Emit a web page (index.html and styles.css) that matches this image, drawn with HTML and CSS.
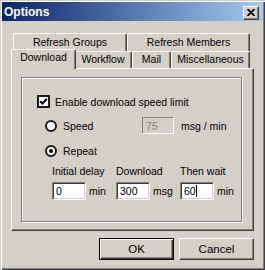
FILE: index.html
```html
<!DOCTYPE html>
<html lang="en">
<head>
    <meta charset="UTF-8">
    <title>Options</title>
    <link rel="stylesheet" href="styles.css">
</head>
<body>
    <div class="window">
        <div class="titlebar">
            <span class="title">Options</span>
            <div class="close-btn">
                <svg width="8" height="7" viewBox="0 0 8 7"><path d="M0.5 0 L7.5 7 M7.5 0 L0.5 7" stroke="#000" stroke-width="1.7" fill="none"/></svg>
            </div>
        </div>
        <div class="tabs">
            <div class="tab-row back">
                <div class="tab tab-groups">Refresh Groups</div>
                <div class="tab tab-members">Refresh Members</div>
            </div>
            <div class="tab-row front">
                <div class="tab tab-download active">Download</div>
                <div class="tab tab-workflow">Workflow</div>
                <div class="tab tab-mail">Mail</div>
                <div class="tab tab-misc">Miscellaneous</div>
            </div>
        </div>
        <div class="panel">
            <div class="group">
                <div class="row check-row">
                    <span class="checkbox">
                        <svg width="9" height="9" viewBox="0 0 9 9"><path d="M1.2 4.2 L3.5 6.5 L7.8 2" stroke="#000" stroke-width="2" fill="none"/></svg>
                    </span>
                    <span>Enable download speed limit</span>
                </div>
                <div class="row speed-row">
                    <span class="radio"></span>
                    <span class="radio-label">Speed</span>
                    <div class="field disabled">75</div>
                    <span class="unit-wide">msg / min</span>
                </div>
                <div class="row repeat-row">
                    <span class="radio checked"></span>
                    <span class="radio-label">Repeat</span>
                </div>
                <div class="fields">
                    <span class="field-label">Initial delay</span>
                    <span class="field-label">Download</span>
                    <span class="field-label">Then wait</span>
                    <div class="field-cell"><div class="field">0</div><span class="unit">min</span></div>
                    <div class="field-cell"><div class="field">300</div><span class="unit">msg</span></div>
                    <div class="field-cell"><div class="field">60<span class="caret"></span></div><span class="unit">min</span></div>
                </div>
            </div>
        </div>
        <div class="buttons">
            <div class="btn default">OK</div>
            <div class="btn">Cancel</div>
        </div>
    </div>
</body>
</html>
```
FILE: styles.css
```css
body {
    margin: 0;
    padding: 0;
    font-family: 'Liberation Sans', Arial, sans-serif;
    font-size: 10.5px;
    color: #000;
    background-color: #d4d0c8;
}
.window {
    width: 265px;
    height: 270px;
    box-sizing: border-box;
    padding: 2px;
    background-color: #d4d0c8;
    box-shadow: inset 1px 1px #d4d0c8, inset 2px 2px #fff, inset -1px -1px #404040, inset -2px -2px #808080;
    overflow: hidden;
}
.titlebar {
    height: 19px;
    display: flex;
    align-items: center;
    justify-content: space-between;
    background: linear-gradient(to right, #0a246a, #a6caf0);
}
.title {
    color: #fff;
    font-weight: bold;
    font-size: 12px;
    padding-left: 2px;
}
.close-btn {
    width: 16px;
    height: 14px;
    box-sizing: border-box;
    margin-right: 4px;
    margin-top: 2px;
    background-color: #d4d0c8;
    border-top: 1px solid #fff;
    border-left: 1px solid #fff;
    border-right: 1px solid #404040;
    border-bottom: 1px solid #404040;
    box-shadow: inset -1px -1px #808080;
    display: flex;
    align-items: center;
    justify-content: center;
}
.tabs {
    margin-top: 12px;
    margin-left: 11px;
    width: 237px;
}
.tab-row {
    display: flex;
    align-items: flex-start;
}
.tab {
    box-sizing: border-box;
    text-align: center;
    background-color: #d4d0c8;
    border-top: 1px solid #fff;
    border-left: 1px solid #fff;
    border-right: 1px solid #404040;
    border-top-left-radius: 2px;
    border-top-right-radius: 2px;
    box-shadow: inset -1px 0 #808080;
    white-space: nowrap;
}
.back .tab {
    height: 18px;
    line-height: 16px;
}
.front .tab {
    height: 17px;
    line-height: 15px;
}
.tab-groups { width: 114px; }
.tab-members { width: 123px; }
.tab-download { width: 61px; }
.tab-workflow { width: 58px; }
.tab-mail { width: 39px; }
.tab-misc { width: 79px; }
.front .tab.active {
    position: relative;
    z-index: 1;
    width: 65px;
    height: 20px;
    margin: -2px -2px -1px -2px;
    line-height: 15px;
}
.panel {
    margin-left: 9px;
    width: 243px;
    height: 163px;
    box-sizing: border-box;
    border-top: 1px solid #fff;
    border-left: 1px solid #fff;
    border-right: 1px solid #404040;
    border-bottom: 1px solid #404040;
    box-shadow: inset -1px -1px #808080;
    padding-top: 8px;
    padding-left: 9px;
}
.group {
    width: 221px;
    height: 145px;
    box-sizing: border-box;
    border: 1px solid #808080;
    box-shadow: inset 1px 1px #fff, 1px 1px #fff;
    padding-top: 17px;
}
.row {
    display: flex;
    align-items: center;
}
.check-row {
    height: 13px;
    padding-left: 15px;
    gap: 5px;
}
.checkbox {
    width: 13px;
    height: 13px;
    box-sizing: border-box;
    border: 2px solid #1a1a1a;
    background-color: #fff;
    display: flex;
    align-items: center;
    justify-content: center;
}
.speed-row {
    height: 17px;
    margin-top: 9px;
    padding-left: 23px;
}
.repeat-row {
    height: 17px;
    margin-top: 8px;
    padding-left: 23px;
}
.radio {
    width: 12px;
    height: 12px;
    box-sizing: border-box;
    border: 2px solid #1a1a1a;
    border-radius: 50%;
    background-color: #fff;
    display: flex;
    align-items: center;
    justify-content: center;
}
.radio.checked::after {
    content: "";
    width: 4px;
    height: 4px;
    border-radius: 50%;
    background-color: #000;
}
.radio-label {
    margin-left: 6px;
}
.speed-row .radio-label {
    width: 79px;
}
.field {
    width: 34px;
    height: 18px;
    box-sizing: border-box;
    border-top: 1px solid #808080;
    border-left: 1px solid #808080;
    border-right: 1px solid #fff;
    border-bottom: 1px solid #fff;
    box-shadow: inset 1px 1px #404040, inset -1px -1px #d4d0c8;
    background-color: #fff;
    padding-left: 3px;
    line-height: 16px;
    display: flex;
    align-items: center;
}
.field.disabled {
    width: 32px;
    height: 17px;
    background-color: #d4d0c8;
    color: #808080;
    box-shadow: none;
}
.caret {
    display: inline-block;
    width: 1px;
    height: 12px;
    background-color: #000;
}
.unit-wide {
    margin-left: 7px;
}
.fields {
    display: grid;
    grid-template-columns: repeat(3, 64px);
    margin-left: 30px;
    margin-top: 6px;
    row-gap: 4px;
}
.field-label {
    line-height: 13px;
    white-space: nowrap;
}
.field-cell {
    display: flex;
    align-items: center;
    gap: 3px;
}
.buttons {
    margin-left: 9px;
    margin-top: 7px;
    width: 243px;
    display: flex;
    justify-content: flex-end;
    gap: 5px;
}
.btn {
    width: 75px;
    height: 22px;
    box-sizing: border-box;
    border-top: 1px solid #fff;
    border-left: 1px solid #fff;
    border-right: 1px solid #404040;
    border-bottom: 1px solid #404040;
    box-shadow: inset -1px -1px #808080;
    text-align: center;
    line-height: 20px;
    font-size: 11.5px;
}
.btn.default {
    border: 1px solid #000;
    box-shadow: inset 1px 1px #fff, inset -1px -1px #404040, inset -2px -2px #808080;
}
```
